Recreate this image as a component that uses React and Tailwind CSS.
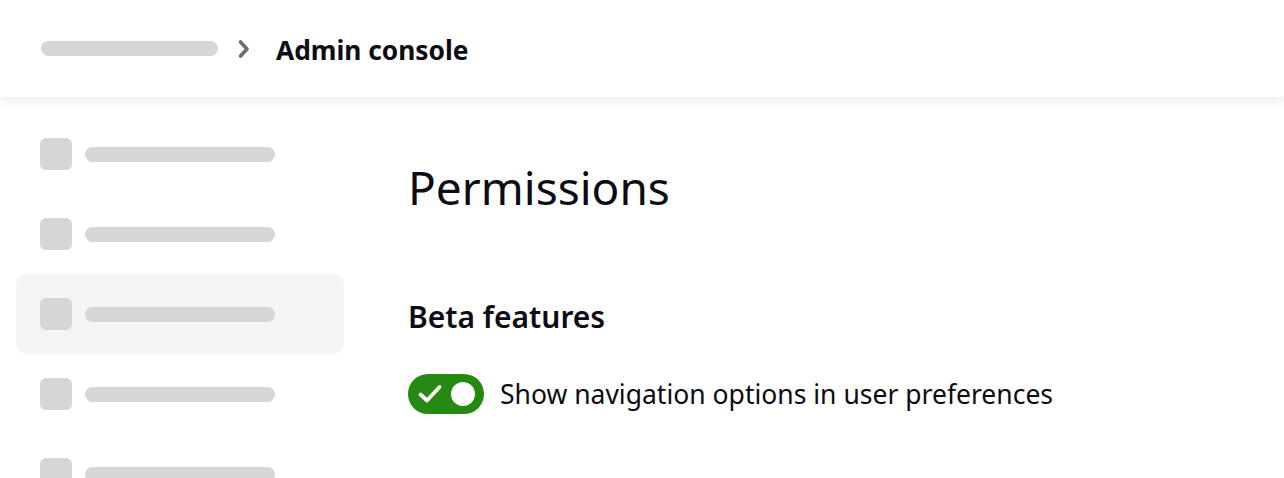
import React from 'react';

const NavItem = ({ active }) => (
  <div className={`flex h-20 items-center gap-[13px] rounded-xl px-6 ${active ? 'bg-[#f4f4f6]' : ''}`}>
    <div className="h-8 w-8 rounded-md bg-[#d6d6d9]" />
    <div className="h-[15px] w-[190px] rounded-full bg-[#d6d6d9]" />
  </div>
);

const App = () => {
  return (
    <div className="h-[478px] w-full overflow-hidden bg-white text-[#0c0c14]" style={{ fontFamily: '"Noto Sans", sans-serif' }}>
      {/* Header */}
      <div className="relative z-10 flex h-[97px] items-center bg-white pl-[41px] shadow-[0_2px_10px_rgba(0,0,0,0.1)]">
        <div className="h-[15px] w-[177px] rounded-full bg-[#d6d6d9]" />
        <svg className="ml-[17px] h-5 w-5" viewBox="0 0 20 20" fill="none">
          <path d="M5.5 3 L12 10 L5.5 17" stroke="#6d6d72" strokeWidth="3.6" strokeLinecap="round" strokeLinejoin="round" />
        </svg>
        <span className="ml-[21px] pt-[2px] text-[26.3px] leading-[32px] font-bold">Admin console</span>
      </div>

      <div className="flex">
        {/* Sidebar */}
        <div className="flex w-[344px] flex-col pl-4 pt-[17px]">
          <NavItem />
          <NavItem />
          <NavItem active />
          <NavItem />
          <NavItem />
        </div>

        {/* Content */}
        <div className="pl-16 pt-[62px]">
          <h1 className="text-[46px] leading-[56px] font-normal">Permissions</h1>
          <h2 className="mt-[84px] text-[30px] leading-[36px] font-semibold">Beta features</h2>
          <div className="mt-[39px] flex items-center gap-4">
            <div className="flex h-10 w-[76px] items-center justify-between rounded-full bg-[#268a12] pl-[9px] pr-[9px]">
              <svg className="h-6 w-[26px]" viewBox="0 0 26 24" fill="none">
                <path d="M3.5 12.5 L10 18.5 L22.5 5" stroke="white" strokeWidth="3.8" strokeLinecap="round" strokeLinejoin="round" />
              </svg>
              <div className="h-6 w-6 rounded-full bg-white" />
            </div>
            <span className="text-[26.5px] leading-[40px]">Show navigation options in user preferences</span>
          </div>
        </div>
      </div>
    </div>
  );
};

export default App;
